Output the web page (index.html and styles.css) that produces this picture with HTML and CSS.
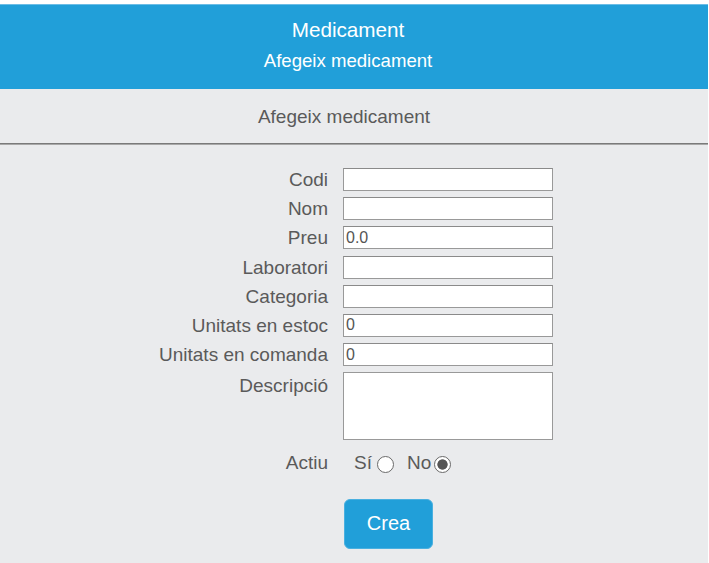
FILE: index.html
```html
<!DOCTYPE html>
<html lang="ca">
<head>
<meta charset="utf-8">
<title>Medicament</title>
<link rel="stylesheet" href="styles.css">
</head>
<body>
<div class="page">
  <header class="top">
    <h1 class="title">Medicament</h1>
    <div class="subtitle">Afegeix medicament</div>
  </header>
  <main class="content">
    <h2 class="section-title">Afegeix medicament</h2>
    <hr class="rule">
    <form class="form">
      <label class="lbl" for="codi">Codi</label>
      <input class="field" id="codi" type="text">
      <label class="lbl" for="nom">Nom</label>
      <input class="field" id="nom" type="text">
      <label class="lbl" for="preu">Preu</label>
      <input class="field" id="preu" type="text" value="0.0">
      <label class="lbl" for="lab">Laboratori</label>
      <input class="field" id="lab" type="text">
      <label class="lbl" for="cat">Categoria</label>
      <input class="field" id="cat" type="text">
      <label class="lbl" for="estoc">Unitats en estoc</label>
      <input class="field" id="estoc" type="text" value="0">
      <label class="lbl" for="comanda">Unitats en comanda</label>
      <input class="field" id="comanda" type="text" value="0">
      <label class="lbl lbl-top" for="desc">Descripció</label>
      <textarea class="area" id="desc"></textarea>
      <span class="lbl actiu-lbl">Actiu</span>
      <div class="radios">
        <label class="opt">Sí <input class="radio" type="radio" name="actiu"></label>
        <label class="opt">No<input class="radio" type="radio" name="actiu" checked></label>
      </div>
      <div class="submit-row">
        <button class="btn" type="button">Crea</button>
      </div>
    </form>
  </main>
</div>
</body>
</html>
```

FILE: styles.css
```css
html, body {
  margin: 0;
  padding: 0;
  background: #ffffff;
}
body {
  font-family: "Liberation Sans", Arial, sans-serif;
  color: #555555;
}
.page {
  margin: 4px 1px 0 0;
  background: #eaebed;
  min-height: 559px;
}
.top {
  background: #219fd9;
  border-top: 1px solid #6cbde6;
  box-sizing: border-box;
  height: 85px;
  padding: 13px 12px 0 0;
  text-align: center;
  color: #ffffff;
}
.title {
  margin: 0;
  font-size: 20.7px;
  font-weight: normal;
  line-height: 24px;
}
.subtitle {
  margin-top: 7px;
  font-size: 18.6px;
  line-height: 24px;
}
.content {
  padding-top: 16px;
}
.section-title {
  margin: 0;
  padding-right: 20px;
  font-size: 19px;
  font-weight: normal;
  line-height: 24px;
  text-align: center;
  color: #5a5a5a;
}
.rule {
  margin: 14px 0 0;
  border: 0;
  border-top: 1px solid #7a7a7a;
  border-bottom: 1px solid #a8a8a8;
  height: 0;
}
.form {
  display: grid;
  grid-template-columns: auto 210px;
  justify-content: center;
  column-gap: 15px;
  row-gap: 6.2px;
  padding: 23px 0 14px 4px;
}
.lbl {
  font-size: 19px;
  line-height: 23px;
  text-align: right;
  color: #5a5a5a;
  align-self: center;
}
.lbl-top {
  align-self: start;
  padding-top: 2px;
}
.field {
  box-sizing: border-box;
  width: 210px;
  height: 23px;
  margin: 0;
  border: 1px solid #999999;
  border-top-color: #8a8a8a;
  background: #ffffff;
  font-family: "Liberation Sans", Arial, sans-serif;
  font-size: 16px;
  color: #555555;
  padding: 0 2px;
  outline: none;
}
.area {
  box-sizing: border-box;
  width: 210px;
  height: 68px;
  margin: 0;
  border: 1px solid #999999;
  background: #ffffff;
  resize: none;
}
.actiu-lbl {
  margin-top: 4px;
}
.radios {
  margin-top: 4px;
  padding-left: 11px;
  display: flex;
  align-items: center;
  gap: 13px;
  height: 24px;
  font-size: 19px;
}
.opt {
  display: flex;
  align-items: center;
  gap: 5px;
  color: #5a5a5a;
}
.opt:last-child {
  gap: 3px;
}
.radio {
  appearance: none;
  -webkit-appearance: none;
  margin: 0;
  width: 17px;
  height: 17px;
  border-radius: 50%;
  border: 1px solid #6a6a6a;
  background: #ffffff;
  box-sizing: border-box;
  position: relative;
  top: 2px;
}
.radio:checked {
  background: radial-gradient(circle, #555555 0, #555555 4.8px, #ffffff 5.5px);
}
.submit-row {
  grid-column: 2;
  margin-top: 18px;
}
.btn {
  width: 89px;
  height: 50px;
  margin-left: 1px;
  border: 1px solid #4ab0e0;
  border-radius: 6px;
  background: #219fd9;
  color: #ffffff;
  font-family: "Liberation Sans", Arial, sans-serif;
  font-size: 20px;
  cursor: pointer;
}
```
